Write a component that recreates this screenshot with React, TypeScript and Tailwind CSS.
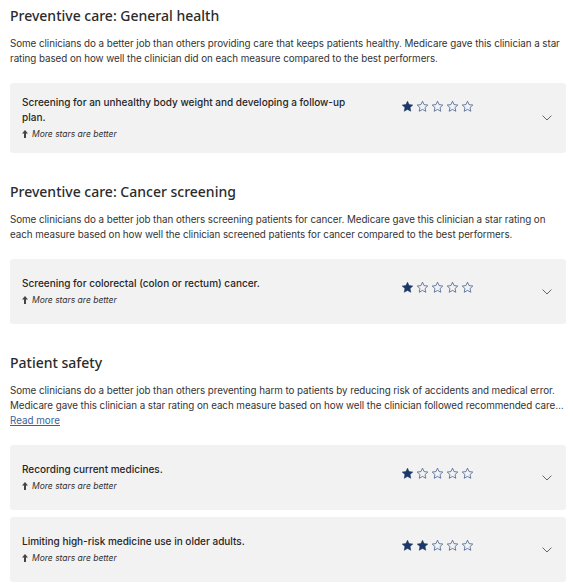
import React from 'react';

type Measure = { title: string; stars: number };
type Section = { heading: string; text: string; clamp?: boolean; measures: Measure[] };

const sections: Section[] = [
  {
    heading: 'Preventive care: General health',
    text: 'Some clinicians do a better job than others providing care that keeps patients healthy. Medicare gave this clinician a star rating based on how well the clinician did on each measure compared to the best performers.',
    measures: [{ title: 'Screening for an unhealthy body weight and developing a follow-up plan.', stars: 1 }],
  },
  {
    heading: 'Preventive care: Cancer screening',
    text: 'Some clinicians do a better job than others screening patients for cancer. Medicare gave this clinician a star rating on each measure based on how well the clinician screened patients for cancer compared to the best performers.',
    measures: [{ title: 'Screening for colorectal (colon or rectum) cancer.', stars: 1 }],
  },
  {
    heading: 'Patient safety',
    text: 'Some clinicians do a better job than others preventing harm to patients by reducing risk of accidents and medical error. Medicare gave this clinician a star rating on each measure based on how well the clinician followed recommended care for keeping patients safe compared to the best performers.',
    clamp: true,
    measures: [
      { title: 'Recording current medicines.', stars: 1 },
      { title: 'Limiting high-risk medicine use in older adults.', stars: 2 },
    ],
  },
];

function Star({ filled }: { filled: boolean }) {
  return (
    <svg width="13" height="13" viewBox="0 0 24 24" className="shrink-0">
      <path
        d="M12 2.2l2.9 6.3 6.9.8-5.1 4.7 1.4 6.8L12 17.4l-6.1 3.4 1.4-6.8-5.1-4.7 6.9-.8z"
        fill={filled ? '#1c3868' : 'none'}
        stroke={filled ? '#1c3868' : '#3f5b8c'}
        strokeWidth={filled ? 1 : 1.4}
        strokeLinejoin="round"
      />
    </svg>
  );
}

function MeasureCard({ m }: { m: Measure }) {
  return (
    <div className="flex min-h-[65px] items-center rounded-[3px] bg-[#f2f2f2] py-3 pl-3 pr-[14px]">
      {/* title block and stars share a top edge, the pair is centred in the card */}
      <div className="flex items-start">
        <div className="w-[340px] shrink-0">
          <div className="text-[10px] font-medium leading-[15px] text-[#262626]">{m.title}</div>
          <div className="mt-[2px] flex items-center gap-[4px] text-[8.5px] italic leading-[14px] text-[#333]">
            <svg width="6" height="8" viewBox="0 0 6 8">
              <path d="M3 0L6 3.4H4V8H2V3.4H0z" fill="#444" />
            </svg>
            More stars are better
          </div>
        </div>
        <div className="ml-[39px] flex gap-[2px] pt-[5px]">
          {[0, 1, 2, 3, 4].map((i) => (
            <Star key={i} filled={i < m.stars} />
          ))}
        </div>
      </div>
      <svg width="10" height="6" viewBox="0 0 10 6" className="ml-auto">
        <path d="M0.6 0.6L5 5 9.4 0.6" fill="none" stroke="#666" strokeWidth="1" />
      </svg>
    </div>
  );
}

export default function App() {
  return (
    <div className="min-h-[587px] w-[573px] bg-white pl-[10px] pr-[7px] pt-[6px]" style={{ fontFamily: 'Inter, "Noto Sans", sans-serif' }}>
      {sections.map((s, idx) => (
        <div key={s.heading} className={idx === 0 ? '' : 'mt-[29px]'}>
          <h2 className="text-[14px] font-medium leading-[20px] text-[#2b2b2b]" style={{ fontFamily: '"Noto Sans", Inter, sans-serif' }}>
            {s.heading}
          </h2>
          <p className={`mt-[10px] text-[9.8px] leading-[15px] tracking-[-0.05px] text-[#333] ${s.clamp ? 'line-clamp-2' : ''}`}>{s.text}</p>
          {s.clamp && (
            <a href="#" className="block w-fit text-[9.8px] leading-[15px] text-[#3d5e98] underline">
              Read more
            </a>
          )}
          <div className="mt-[17px] flex flex-col gap-[7px]">
            {s.measures.map((m) => (
              <MeasureCard key={m.title} m={m} />
            ))}
          </div>
        </div>
      ))}
    </div>
  );
}
